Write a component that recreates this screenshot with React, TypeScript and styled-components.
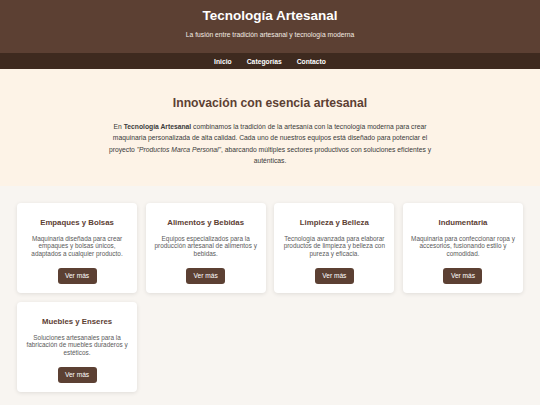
import React from "react";
import styled, { createGlobalStyle } from "styled-components";

const Global = createGlobalStyle`
  html, body { margin: 0; padding: 0; }
  body {
    font-family: "Liberation Sans", Arial, sans-serif;
    background: #f8f5f1;
    color: #333;
  }
`;

const Header = styled.header`
  background: #5c4033;
  color: #fff;
  text-align: center;
  height: 53px;
  display: flex;
  flex-direction: column;
  align-items: center;
  justify-content: flex-start;
  padding-top: 8px;
  box-sizing: border-box;
`;

const Title = styled.h1`
  margin: 0;
  font-size: 13.5px;
  line-height: 16px;
  font-weight: 700;
`;

const Subtitle = styled.p`
  margin: 7px 0 0;
  font-size: 6.75px;
  line-height: 8px;
  color: #f3ebe4;
`;

const Nav = styled.nav`
  background: #3e2a1f;
  height: 16px;
  display: flex;
  justify-content: center;
  align-items: center;
  gap: 15px;
`;

const NavLink = styled.a`
  color: #fff;
  font-size: 6.75px;
  font-weight: 700;
  text-decoration: none;
`;

const Intro = styled.section`
  background: #fdf3e7;
  text-align: center;
  padding: 26px 0 19px;
  display: flex;
  flex-direction: column;
  align-items: center;
`;

const IntroHeading = styled.h2`
  margin: 0;
  font-size: 12.2px;
  line-height: 16px;
  color: #5c4033;
  font-weight: 700;
`;

const IntroText = styled.p`
  margin: 10px 0 0;
  max-width: 330px;
  font-size: 6.75px;
  line-height: 11.4px;
  color: #3a3a3a;
`;

const Grid = styled.section`
  display: grid;
  grid-template-columns: repeat(4, 1fr);
  gap: 9px 8.6px;
  padding: 17px;
`;

const Card = styled.div`
  background: #fff;
  border-radius: 4px;
  box-shadow: 0 1px 4px rgba(0, 0, 0, 0.1);
  height: 90px;
  box-sizing: border-box;
  padding: 15px 8px 0;
  text-align: center;
  display: flex;
  flex-direction: column;
  align-items: center;
`;

const CardTitle = styled.h3`
  margin: 0;
  font-size: 7.8px;
  line-height: 10px;
  color: #5c4033;
  font-weight: 700;
`;

const CardText = styled.p`
  margin: 7px 0 0;
  font-size: 6.4px;
  line-height: 7.8px;
  color: #5a5a5a;
  height: 24px;
`;

const Button = styled.a`
  margin-top: 9px;
  background: #5c4033;
  color: #fff;
  font-size: 6.6px;
  border-radius: 3px;
  width: 39px;
  height: 16px;
  display: flex;
  align-items: center;
  justify-content: center;
  text-decoration: none;
`;

const categories = [
  {
    title: "Empaques y Bolsas",
    text: "Maquinaria diseñada para crear empaques y bolsas únicos, adaptados a cualquier producto.",
  },
  {
    title: "Alimentos y Bebidas",
    text: "Equipos especializados para la producción artesanal de alimentos y bebidas.",
  },
  {
    title: "Limpieza y Belleza",
    text: "Tecnología avanzada para elaborar productos de limpieza y belleza con pureza y eficacia.",
  },
  {
    title: "Indumentaria",
    text: "Maquinaria para confeccionar ropa y accesorios, fusionando estilo y comodidad.",
  },
  {
    title: "Muebles y Enseres",
    text: "Soluciones artesanales para la fabricación de muebles duraderos y estéticos.",
  },
];

export default function App() {
  return (
    <>
      <Global />
      <Header>
        <Title>Tecnología Artesanal</Title>
        <Subtitle>La fusión entre tradición artesanal y tecnología moderna</Subtitle>
      </Header>
      <Nav>
        <NavLink href="#">Inicio</NavLink>
        <NavLink href="#">Categorías</NavLink>
        <NavLink href="#">Contacto</NavLink>
      </Nav>
      <Intro>
        <IntroHeading>Innovación con esencia artesanal</IntroHeading>
        <IntroText>
          En <strong>Tecnología Artesanal</strong> combinamos la tradición de la artesanía con la
          tecnología moderna para crear maquinaria personalizada de alta calidad. Cada uno de
          nuestros equipos está diseñado para potenciar el proyecto{" "}
          <em>"Productos Marca Personal"</em>, abarcando múltiples sectores productivos con
          soluciones eficientes y auténticas.
        </IntroText>
      </Intro>
      <Grid>
        {categories.map((c) => (
          <Card key={c.title}>
            <CardTitle>{c.title}</CardTitle>
            <CardText>{c.text}</CardText>
            <Button href="#">Ver más</Button>
          </Card>
        ))}
      </Grid>
    </>
  );
}
